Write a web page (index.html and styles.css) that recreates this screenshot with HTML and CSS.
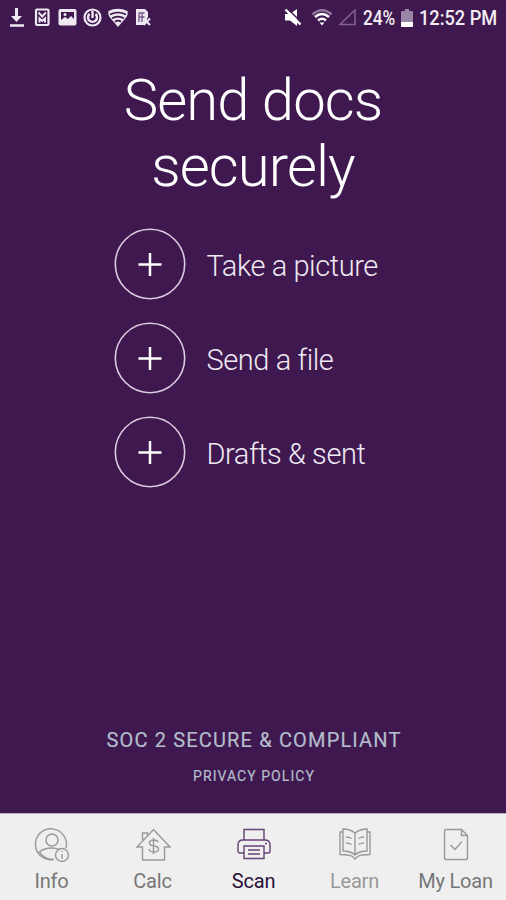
FILE: index.html
```html
<!DOCTYPE html>
<html lang="en">
<head>
<meta charset="utf-8">
<title>Send docs securely</title>
<link rel="stylesheet" href="styles.css">
</head>
<body>
<div class="app">
  <header class="status">
    <svg class="notifications" width="160" height="36" viewBox="0 0 160 36" fill="none" stroke="#eee8f2" stroke-width="2">
      <path d="M16.500 8v9" stroke-width="3"/><path d="M11 16h11l-5.500 6z" fill="#eee8f2" stroke="none"/><path d="M10 25.500h14" stroke-width="2.500"/>
      <rect x="36" y="9.500" width="12.500" height="15.500" rx="1" stroke-width="2.200"/><path d="M38.500 12.500l3.700 4 3.700-4M39.500 22.500v-4l2.700 2.500 2.800-2.500v4" stroke-width="2"/>
      <rect x="58.500" y="9" width="18" height="16.500" rx="2" fill="#eee8f2" stroke="none"/><path d="M61 12h13v7l-3-3-3 3-3-2-4 3z" fill="#3f184f" stroke="none"/><circle cx="65" cy="14.500" r="1.500" fill="#eee8f2" stroke="none"/>
      <circle cx="92.500" cy="17.500" r="8" stroke-width="2.200"/><path d="M89.500 14a4.500 4.500 0 1 0 6 0M92.500 11v7" stroke-width="2.400"/>
      <path d="M118 27l-8.500-10q-2-3-1-6 9-4.500 19 0 1 3-1 6z" fill="#eee8f2" stroke="none"/><path d="M110 14.500q8-4 16 0M112 18.300q6-3.500 12 0M115 21.700q3-2 6 0" stroke="#3f184f" stroke-width="1.700"/>
      <path d="M136 9h9l3 3v5l-4 8h-8z" fill="#eee8f2" stroke="none"/><path d="M138.500 13h6M139 13v9M142 14v8M138.500 17h6" stroke="#765487" stroke-width="1.300"/><path d="M143.500 18.500l6.500 6.500M150 18.500l-6.500 6.500" stroke-width="2"/>
    </svg>
    <div class="system">
      <svg width="78" height="36" viewBox="0 0 78 36" fill="none" stroke="#fff">
        <path d="M1 14h4.500L13 9v17l-7-5.500H1z" fill="#fff" stroke="none"/><path d="M3 8l15 15" stroke="#3f184f" stroke-width="1.500"/><path d="M1.500 9.500l15 15" stroke-width="2.400"/>
        <path d="M28.500 14.500Q38 6 47.500 14.500" stroke="#92789f" stroke-width="2.500"/><path d="M31 17q7-6 14 0M34 20.500q4-3.500 8 0" stroke-width="2.500"/><path d="M35.500 22.500h5L38 25.500z" fill="#fff" stroke="none"/>
        <path d="M56 24.500h15V10z" stroke="#826391" stroke-width="1.500"/>
      </svg>
      <span class="percent">24%</span>
      <svg class="battery" width="12" height="18" viewBox="0 0 12 18"><path d="M4 0h4v2h3q1 0 1 1v14q0 1-1 1H1q-1 0-1-1V3q0-1 1-1h3z" fill="#9b85a6"/><path d="M0 13h12v4q0 1-1 1H1q-1 0-1-1z" fill="#fff"/></svg>
      <time class="clock">12:52 PM</time>
    </div>
  </header>
  <main class="content">
    <h1 class="title">Send docs<br>securely</h1>
    <ul class="actions">
      <li class="action"><svg class="plus" viewBox="0 0 72 72"><circle cx="36" cy="36" r="34.700"/><path d="M24.500 36.500h23M36 25v23"/></svg><span>Take a picture</span></li>
      <li class="action"><svg class="plus" viewBox="0 0 72 72"><circle cx="36" cy="36" r="34.700"/><path d="M24.500 36.500h23M36 25v23"/></svg><span>Send a file</span></li>
      <li class="action"><svg class="plus" viewBox="0 0 72 72"><circle cx="36" cy="36" r="34.700"/><path d="M24.500 36.500h23M36 25v23"/></svg><span>Drafts &amp; sent</span></li>
    </ul>
    <footer class="legal"><div class="compliance">SOC 2 SECURE &amp; COMPLIANT</div><div class="privacy">PRIVACY POLICY</div></footer>
  </main>
  <nav class="tabs">
    <div class="tab"><svg viewBox="0 0 36 36"><path d="M20 32.500A15.500 15.500 0 1 1 32 21M5.500 25Q10 21 18 21q4 0 7 1.500M5 24q4 8 15 8.500"/><circle cx="18" cy="13" r="6"/><circle cx="28" cy="28" r="6.500"/><path d="M28 27v5M28 24v1"/></svg><span>Info</span></div>
    <div class="tab"><svg viewBox="0 0 36 36"><path d="M7.500 20H2L18.500 2.500 35 20h-5.500v13h-22zM7.500 14V6h5v2.500"/><path d="M23 15q-1-2-4.500-2-4 0-4 3 0 2.500 4.500 3t4.500 3q0 3-5 3-4 0-4.500-3M18.500 11v16"/></svg><span>Calc</span></div>
    <div class="tab active"><svg viewBox="0 0 36 36"><path d="M8 13V2.500h20V13M8 26H4q-2 0-2-2v-6q0-5 5-5h22q5 0 5 5v6q0 2-2 2h-4"/><path d="M8 19h20v12.500H8zM12 23h12M12 27h12M29 16.500h2"/></svg><span>Scan</span></div>
    <div class="tab learn"><svg viewBox="0 0 36 36"><path d="M18 6Q13 2 6 2v22q8 0 12 4 4-4 12-4V2q-7 0-12 4zm0 0v22M6 5H3v22.500q9 0 12.500 2l2.500 2.500 2.500-2.500q3.500-2 12.500-2V5h-3"/><path d="M9 10q3 0 5.500 1.500M9 16q3 0 5.500 1.500M27 10q-3 0-5.500 1.500M27 16q-3 0-5.500 1.500"/></svg><span>Learn</span></div>
    <div class="tab"><svg viewBox="0 0 36 36"><path d="M8 2.500h15.500l6 6V31q0 1.500-1.500 1.500H8Q6.500 32.500 6.500 31V4Q6.500 2.500 8 2.500zM23.500 2.500v6h6M12.500 18l4.500 4.500 7-8"/></svg><span>My Loan</span></div>
  </nav>
</div>
</body>
</html>
```
FILE: styles.css
```css
* { box-sizing: border-box; }
body { margin: 0; font-family: Roboto, "Liberation Sans", sans-serif; }
.app { width: 506px; height: 900px; display: flex; flex-direction: column; overflow: hidden; background: #3f184f; color: #fff; }
.status { height: 36px; display: flex; justify-content: space-between; }
.system { display: flex; align-items: center; width: 222px; font-size: 20px; font-weight: 500; white-space: nowrap; color: #f2edf5; }
.system svg { flex-shrink: 0; }
.percent { width: 35px; margin-left: 1px; transform: scaleX(.86); transform-origin: left; }
.battery { margin: 0 6px 0 3px; }
.clock { transform: scaleX(.91); transform-origin: left; }
.content { flex: 1; display: flex; flex-direction: column; }
.title { margin: 32px 0 0; font-size: 58px; line-height: 65.500px; font-weight: 300; letter-spacing: -.9px; text-align: center; }
.actions { list-style: none; margin: 29px 0 0 114px; padding: 0; display: flex; flex-direction: column; gap: 22px; }
.action { height: 72px; display: flex; align-items: center; gap: 20.500px; font-size: 29px; font-weight: 300; letter-spacing: -.42px; color: #eee9f2; white-space: nowrap; }
.action span { padding-top: 3px; }
.plus { width: 72px; height: 72px; fill: none; stroke: #d9cbe0; stroke-width: 1.600; }
.plus path { stroke: #fff; stroke-width: 2.500; }
.legal { margin-top: auto; margin-bottom: 28px; padding-left: 2px; text-align: center; color: #b3bdcc; }
.compliance { font-size: 20px; line-height: 24px; letter-spacing: 1.160px; margin-bottom: 15px; -webkit-text-stroke: .2px; }
.privacy { font-size: 14px; line-height: 18px; letter-spacing: 1.050px; -webkit-text-stroke: .2px; }
.tabs { height: 87px; padding-left: 1px; display: grid; grid-template-columns: repeat(5, 1fr); background: #efefef; border-top: 1px solid #b6aabc; }
.tab { display: flex; flex-direction: column; align-items: center; padding-top: 13px; font-size: 20px; line-height: 24px; letter-spacing: -.2px; color: #777; white-space: nowrap; }
.tab svg { width: 36px; height: 36px; fill: none; stroke: #999; stroke-width: 1.400; margin-bottom: 6px; }
.active { color: #29103a; }
.active svg { stroke: #654375; }
.learn { color: #999; }
```
